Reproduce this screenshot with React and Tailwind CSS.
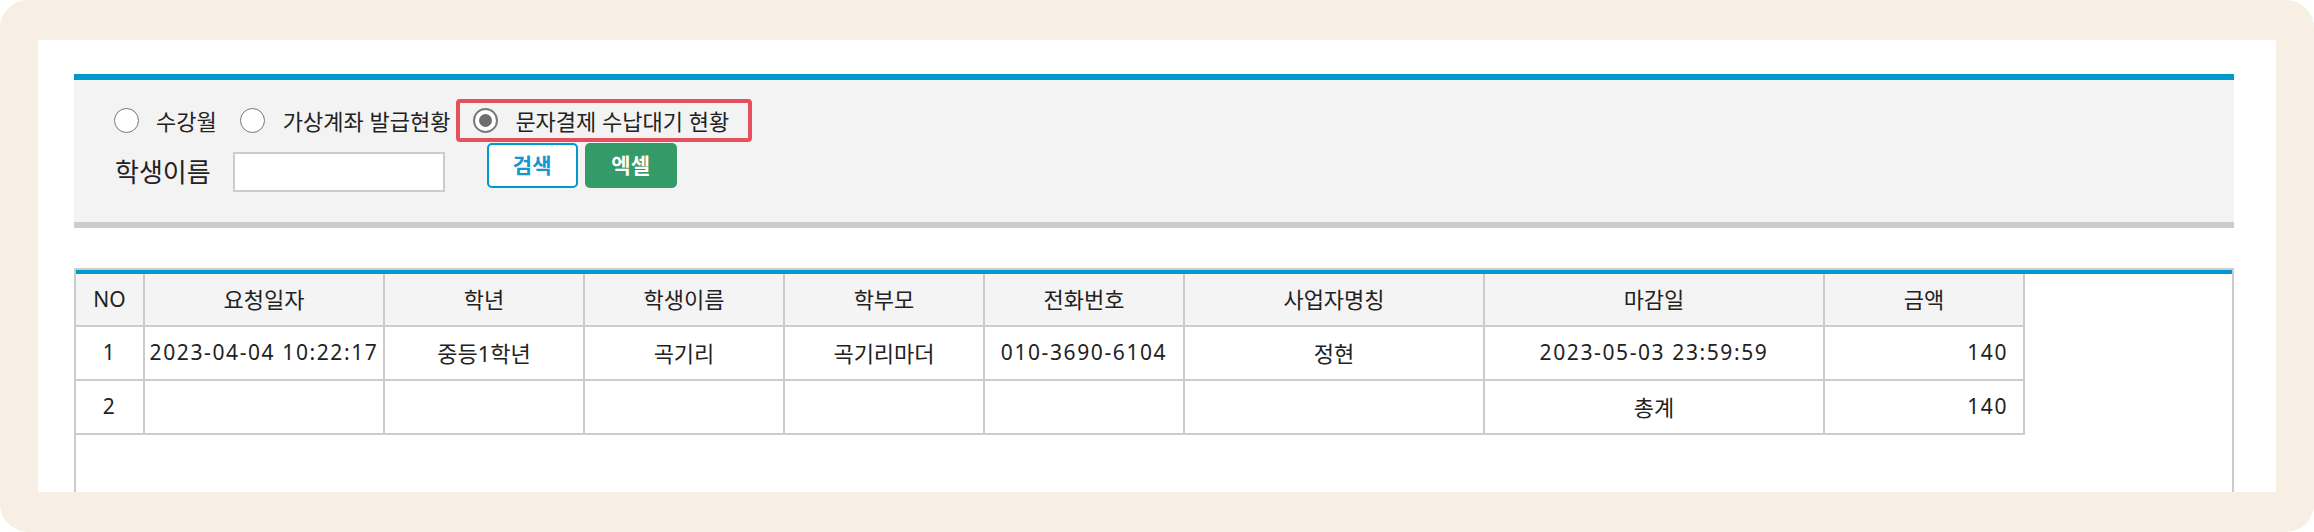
import React from "react";

const columns = [
  { label: "NO", w: "w-[69px]" },
  { label: "요청일자", w: "w-[240px]" },
  { label: "학년", w: "w-[200px]" },
  { label: "학생이름", w: "w-[200px]" },
  { label: "학부모", w: "w-[200px]" },
  { label: "전화번호", w: "w-[200px]" },
  { label: "사업자명칭", w: "w-[300px]" },
  { label: "마감일", w: "w-[340px]" },
  { label: "금액", w: "w-[200px]" },
];

const rows = [
  ["1", "2023-04-04 10:22:17", "중등1학년", "곡기리", "곡기리마더", "010-3690-6104", "정현", "2023-05-03 23:59:59", "140"],
  ["2", "", "", "", "", "", "", "총계", "140"],
];

// cells that hold mostly digits get a little tracking so they run as wide as the original
const isNumeric = (v) => /^[0-9:\- ]+$/.test(v);

const Radio = ({ checked, className = "" }) =>
  checked ? (
    <span className={`flex h-[25px] w-[25px] shrink-0 items-center justify-center rounded-full border-2 border-[#7a7a7a] bg-white ${className}`}>
      <span className="h-[13px] w-[13px] rounded-full bg-[#6e6e6e]" />
    </span>
  ) : (
    <span className={`block h-[25px] w-[25px] shrink-0 rounded-full border-[1.5px] border-[#767676] bg-white ${className}`} />
  );

const App = () => {
  return (
    <div className="h-[532px] w-[2314px] bg-white font-['Noto_Sans','Noto_Sans_CJK_KR',sans-serif] text-[#222]">
      <div className="h-full rounded-[28px] bg-[#f7efe4] px-[38px] py-[40px]">
        <div className="h-[452px] overflow-hidden bg-white pl-[36px] pr-[42px] pt-[34px]">
          {/* search panel */}
          <div className="h-[154px] border-t-[6px] border-b-[6px] border-t-[#0099cc] border-b-[#cccccc] bg-[#f3f3f3] pl-[40px] pt-[19px]">
            <div className="flex h-[43px] items-center text-[22px]">
              <Radio />
              <span className="ml-[17px] leading-none">수강월</span>
              <Radio className="ml-[23px]" />
              <span className="ml-[18px] leading-none">가상계좌 발급현황</span>
              <div className="ml-[6px] flex h-[43px] items-center rounded-[4px] border-4 border-[#e5505c] pl-[13px] pr-[19px]">
                <Radio checked />
                <span className="ml-[17px] leading-none">문자결제 수납대기 현황</span>
              </div>
            </div>
            <div className="mt-[1px] flex items-start">
              <div className="mt-[9px] flex h-[40px] items-center">
                <span className="ml-[1px] text-[26px] leading-none">학생이름</span>
                <input
                  type="text"
                  className="ml-[22px] h-[40px] w-[212px] border-2 border-[#cccccc] bg-white outline-none"
                />
              </div>
              <button className="ml-[42px] h-[45px] w-[91px] rounded-[5px] border-2 border-[#0099cc] bg-white text-[21px] font-bold text-[#1597cf]">
                검색
              </button>
              <button className="ml-[7px] h-[45px] w-[92px] rounded-[5px] bg-[#349a68] text-[21px] font-bold text-white">
                엑셀
              </button>
            </div>
          </div>

          {/* result table */}
          <div className="mt-[40px] h-[280px] border-2 border-b-0 border-[#cccccc]">
            <div className="h-[4px] bg-[#0099cc]" />
            <div className="flex">
              {columns.map((c) => (
                <div
                  key={c.label}
                  className={`${c.w} flex h-[53px] shrink-0 items-center justify-center border-r-2 border-b-2 border-[#cccccc] bg-[#f4f4f4] ${
                    c.label === "NO" ? "text-[21px]" : "text-[22px]"
                  }`}
                >
                  {c.label}
                </div>
              ))}
            </div>
            {rows.map((r, i) => (
              <div key={i} className="flex">
                {r.map((v, j) => (
                  <div
                    key={j}
                    className={`${columns[j].w} flex h-[54px] shrink-0 items-center border-r-2 border-b-2 border-[#cccccc] bg-white ${
                      j === 8 ? "justify-end pr-[15px]" : "justify-center"
                    } ${isNumeric(v) ? "tracking-[1.6px] text-[21px]" : "text-[22px]"}`}
                  >
                    {v}
                  </div>
                ))}
              </div>
            ))}
          </div>
        </div>
      </div>
    </div>
  );
};

export default App;
